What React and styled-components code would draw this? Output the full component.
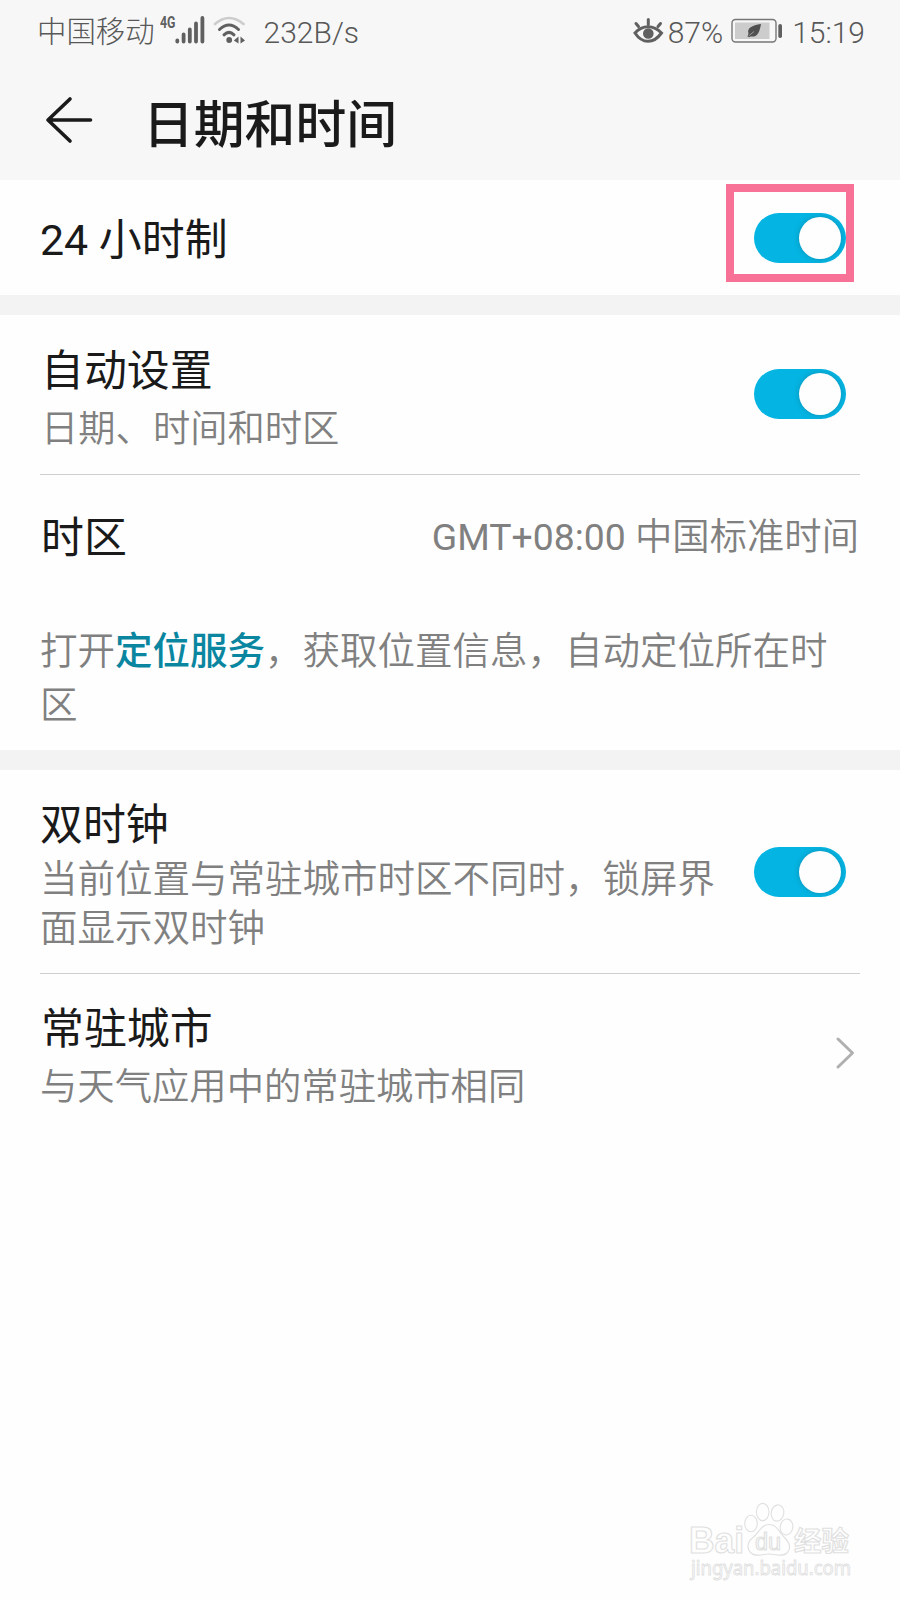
import React from 'react';
import styled, { createGlobalStyle } from 'styled-components';

const GlobalStyle = createGlobalStyle`
  * { box-sizing: border-box; }
  body {
    margin: 0;
    background: #fefefe;
    font-family: Roboto, "Noto Sans CJK SC", sans-serif;
    color: #1a1a1a;
  }
`;

const Screen = styled.div`
  position: relative;
  width: 900px;
  height: 1600px;
  overflow: hidden;
  background: #fefefe;
`;

const Header = styled.header`
  height: 180px;
  background: #f7f7f7;
`;

const StatusBar = styled.div`
  display: flex;
  justify-content: space-between;
  height: 62px;
  padding: 0 35px 0 37px;
  color: #585858;
  font-size: 29.4px;
  line-height: 65px;
`;

const StatusGroup = styled.div`
  display: flex;
  align-items: center;
  height: 62px;
  white-space: nowrap;
`;

const StatusText = styled.span`
  margin-top: 2px;
  margin-left: ${(p) => p.$gap || 0}px;
  font-size: ${(p) => p.$size || 29.4}px;
  font-weight: 300;
`;

const StatusIcon = styled.svg`
  display: block;
  flex: none;
  margin-left: ${(p) => p.$gap || 0}px;
  margin-bottom: ${(p) => p.$lift || 0}px;
`;

const TitleBar = styled.div`
  display: flex;
  align-items: center;
  height: 118px;
  padding: 0 0 0 44px;
`;

const BackIcon = styled.svg`
  display: block;
  margin-bottom: 2px;
`;

const Title = styled.h1`
  margin: 10px 0 0 49px;
  font-size: 50.8px;
  font-weight: 500;
  line-height: 60px;
`;

const Section = styled.section`
  padding: 0 40px;
  border-bottom: ${(p) => (p.$last ? 0 : 20)}px solid #f3f3f3;
`;

const Row = styled.div`
  display: flex;
  align-items: ${(p) => p.$align || 'center'};
  justify-content: space-between;
  height: ${(p) => p.$height}px;
  padding-right: ${(p) => p.$inset || 0}px;
  border-bottom: ${(p) => (p.$divided ? '1px solid #cfcfcf' : '0')};
`;

const Labels = styled.div`
  display: flex;
  flex-direction: column;
  gap: ${(p) => p.$gap || 0}px;
  padding-top: ${(p) => p.$top || 0}px;
`;

const Label = styled.div`
  padding-left: ${(p) => p.$indent || 0}px;
  font-size: 42.9px;
  line-height: 50px;
  white-space: nowrap;
`;

const Secondary = styled.div`
  padding-left: ${(p) => p.$indent || 0}px;
  color: #808080;
  font-size: ${(p) => p.$size || 37.5}px;
  font-weight: 350;
  line-height: ${(p) => p.$line || 49}px;
  white-space: nowrap;
`;

const ZoneValue = styled(Secondary)`
  padding-right: 1px;
`;

const Latin = styled.span`
  font-weight: 400;
`;

const Hint = styled(Secondary)`
  height: 150px;
  padding-top: 24px;
`;

const Link = styled.a`
  color: #0a86a0;
  font-weight: 500;
`;

const SwitchTrack = styled.span`
  display: flex;
  justify-content: flex-end;
  flex: none;
  width: 92px;
  height: 50px;
  margin-top: ${(p) => p.$top || 0}px;
  padding: 4px 5px;
  border-radius: 25px;
  background: #04b4e2;
`;

const Knob = styled.span`
  width: 42px;
  height: 42px;
  border-radius: 50%;
  background: #fefefe;
  box-shadow: 0 0 5px rgba(30, 110, 135, 0.5);
`;

const SwitchHolder = styled.div`
  position: relative;
  display: flex;
`;

const Highlight = styled.span`
  position: absolute;
  top: -29px;
  left: -28px;
  width: 128px;
  height: 98px;
  border: 8px solid #f87298;
`;

const Chevron = styled.svg`
  display: block;
  margin-top: 62px;
`;

const Watermark = styled.svg`
  position: absolute;
  left: 684px;
  top: 1498px;
`;

const Switch = ({ top }) => (
  <SwitchTrack role="switch" aria-checked="true" $top={top}>
    <Knob />
  </SwitchTrack>
);

const Signal = () => (
  <StatusIcon width="46" height="32" viewBox="0 0 46 32" $gap={5} $lift={3}>
    <text x="0" y="13.500" fontSize="16.500" fontWeight="700" fill="#606060" textLength="15.500" lengthAdjust="spacingAndGlyphs">4G</text>
    <g stroke="#606060" strokeWidth="3.800" strokeLinecap="round">
      <path d="M17.300 26.500V27.500M23.600 20.500V27.500M29.800 15.500V27.500M36 9.500V27.500M42.400 4V27.500" />
    </g>
  </StatusIcon>
);

const Wifi = () => (
  <StatusIcon width="34" height="32" viewBox="0 0 34 32" $gap={7} $lift={3}>
    <g fill="none" strokeLinecap="round">
      <path d="M2 10Q16 -2 30.500 10" stroke="#ccc" strokeWidth="2.600" />
      <path d="M6.500 15.500Q16 6.500 25.500 15.500" stroke="#606060" strokeWidth="3" />
      <path d="M11 20.800Q16 16 21 20.800" stroke="#606060" strokeWidth="3" />
    </g>
    <circle cx="16.200" cy="26" r="2.900" fill="#606060" />
    <path d="M25.500 22.500V29.500L20.800 26.400ZM27.500 22.500V29.500L32 26.400Z" fill="#606060" />
  </StatusIcon>
);

const Eye = () => (
  <StatusIcon width="32" height="30" viewBox="0 0 32 30">
    <g fill="none" stroke="#606060" strokeWidth="3" strokeLinecap="round">
      <path d="M3 17Q8.500 10.800 16 10.800T29.500 17Q23.500 25.300 16 25.300T3 17Z" />
      <path d="M16.300 8.500V3.500M6.500 10.500L4 7.500M26 10.500L28.500 7.500" />
    </g>
    <circle cx="16.300" cy="17.500" r="5.300" fill="#606060" />
  </StatusIcon>
);

const Battery = () => (
  <StatusIcon width="52" height="26" viewBox="0 0 52 26" $gap={8} $lift={1}>
    <rect x="1" y="1.500" width="44" height="22.500" rx="3.500" fill="none" stroke="#777" strokeWidth="1.400" />
    <rect x="4" y="4.500" width="34.500" height="16.500" fill="#ccc" />
    <rect x="47.300" y="6" width="3.700" height="14" rx="1.800" fill="#606060" />
    <path d="M30 6C21 7.500 15.500 10 17.500 15.500L16.500 18.500L18 19.300L19.500 18.500C27 19.500 28.500 14 30 6Z" fill="#505050" />
    <path d="M17.500 18L23 13.500" stroke="#ccc" strokeWidth=".6" />
  </StatusIcon>
);

const BaiduMark = () => (
  <Watermark width="180" height="90" viewBox="0 0 180 90">
    <g fill="#fefefe" stroke="#e0e0e0" strokeWidth="1.100" strokeLinejoin="round">
      <text x="5" y="55" fontSize="36" fontWeight="700" fontFamily="'Liberation Sans'" textLength="55" lengthAdjust="spacingAndGlyphs">Bai</text>
      <ellipse cx="67" cy="25.500" rx="6.300" ry="8.200" />
      <ellipse cx="78.700" cy="14" rx="6.300" ry="8.600" />
      <ellipse cx="93.500" cy="15" rx="6.300" ry="8.200" transform="rotate(10 93.500 15)" />
      <ellipse cx="102.500" cy="29" rx="6.300" ry="8" transform="rotate(10 102.500 29)" />
      <path d="M85 26.500C77 26.500 75 35 69 39.500C63 44 62.500 51 67 55C72 59.500 78 56 85 56C92 56 98 59.500 103 55C108 50 105 44 100 39C95 34 93 26.500 85 26.500Z" />
      <text x="71" y="51.500" fontSize="23" fontFamily="'Liberation Sans'" textLength="26" lengthAdjust="spacingAndGlyphs">du</text>
      <text x="110" y="53" fontSize="27.500" fontWeight="700" fontFamily="'Noto Sans CJK SC'">经验</text>
      <text x="7" y="76.500" fontSize="20" fontFamily="'Noto Sans'" strokeWidth=".9" textLength="160" lengthAdjust="spacingAndGlyphs">jingyan.baidu.com</text>
    </g>
  </Watermark>
);

export default function App() {
  return (
    <Screen>
      <GlobalStyle />
      <Header>
        <StatusBar>
          <StatusGroup>
            <StatusText>中国移动</StatusText>
            <Signal />
            <Wifi />
            <StatusText $gap={17} $size={30}>232B/s</StatusText>
          </StatusGroup>
          <StatusGroup>
            <Eye />
            <StatusText $gap={4} $size={30}>87%</StatusText>
            <Battery />
            <StatusText $gap={9} $size={30}>15:19</StatusText>
          </StatusGroup>
        </StatusBar>
        <TitleBar>
          <BackIcon width="50" height="50" viewBox="0 0 50 50">
            <path d="M26 4L4 25L26 46M4 25H46.500" fill="none" stroke="#1a1a1a" strokeWidth="3.600" strokeLinecap="round" strokeLinejoin="round" />
          </BackIcon>
          <Title>日期和时间</Title>
        </TitleBar>
      </Header>

      <Section>
        <Row $height={115} $inset={14}>
          <Labels $top={5}><Label>24 小时制</Label></Labels>
          <SwitchHolder>
            <Switch />
            <Highlight />
          </SwitchHolder>
        </Row>
      </Section>

      <Section>
        <Row $height={160} $inset={14} $divided $align="flex-start">
          <Labels $top={31} $gap={9}>
            <Label $indent={1}>自动设置</Label>
            <Secondary $indent={1} $size={37.3}>日期、时间和时区</Secondary>
          </Labels>
          <Switch top={54} />
        </Row>
        <Row $height={125}>
          <Labels $top={1}><Label $indent={1}>时区</Label></Labels>
          <ZoneValue $size={37.35}><Latin>GMT+08:00 </Latin>中国标准时间</ZoneValue>
        </Row>
        <Hint $line={54}>
          打开<Link>定位服务</Link>，获取位置信息，自动定位所在时<br />区
        </Hint>
      </Section>

      <Section $last>
        <Row $height={204} $inset={14} $divided $align="flex-start">
          <Labels $top={30} $gap={5}>
            <Label>双时钟</Label>
            <Secondary>当前位置与常驻城市时区不同时，锁屏界<br />面显示双时钟</Secondary>
          </Labels>
          <Switch top={77} />
        </Row>
        <Row $height={150} $inset={4} $align="flex-start">
          <Labels $top={30} $gap={9}>
            <Label $indent={1}>常驻城市</Label>
            <Secondary $size={37.35}>与天气应用中的常驻城市相同</Secondary>
          </Labels>
          <Chevron width="21" height="34" viewBox="0 0 21 34">
            <path d="M3 3L17.500 17L3 31" fill="none" stroke="#b0b0b0" strokeWidth="3" strokeLinecap="round" strokeLinejoin="round" />
          </Chevron>
        </Row>
      </Section>

      <BaiduMark />
    </Screen>
  );
}
